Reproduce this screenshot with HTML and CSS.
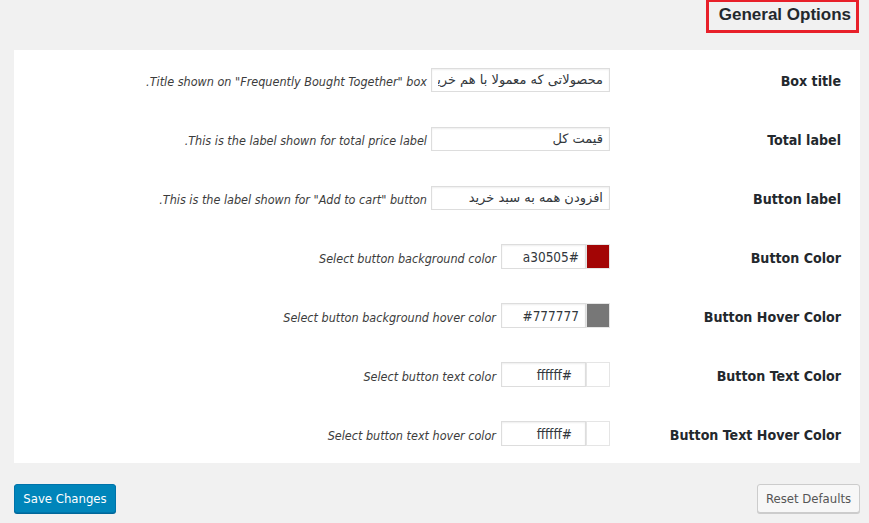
FILE: index.html
```html
<!DOCTYPE html>
<html lang="fa" dir="rtl">
<head>
<meta charset="utf-8">
<link rel="stylesheet" href="styles.css">
</head>
<body>
<div class="page">
  <div class="head">
    <h2 class="title" dir="ltr">General Options</h2>
  </div>
  <div class="panel">
    <div class="row">
      <div class="label">Box title</div>
      <div class="field">
        <input class="text" type="text" value="محصولاتی که معمولا با هم خریداری می شوند">
        <span class="desc">Title shown on "Frequently Bought Together" box.</span>
      </div>
    </div>
    <div class="row">
      <div class="label">Total label</div>
      <div class="field">
        <input class="text" type="text" value="قیمت کل">
        <span class="desc">This is the label shown for total price label.</span>
      </div>
    </div>
    <div class="row">
      <div class="label">Button label</div>
      <div class="field">
        <input class="text" type="text" value="افزودن همه به سبد خرید">
        <span class="desc">This is the label shown for "Add to cart" button.</span>
      </div>
    </div>
    <div class="row">
      <div class="label">Button Color</div>
      <div class="field">
        <span class="picker"><span class="swatch sw-red"></span><input class="color" type="text" value="#a30505"></span>
        <span class="desc">Select button background color</span>
      </div>
    </div>
    <div class="row">
      <div class="label">Button Hover Color</div>
      <div class="field">
        <span class="picker"><span class="swatch sw-grey"></span><input class="color" type="text" value="#777777"></span>
        <span class="desc">Select button background hover color</span>
      </div>
    </div>
    <div class="row">
      <div class="label">Button Text Color</div>
      <div class="field">
        <span class="picker"><span class="swatch sw-white"></span><input class="color color-wide" type="text" value="#ffffff"></span>
        <span class="desc">Select button text color</span>
      </div>
    </div>
    <div class="row">
      <div class="label">Button Text Hover Color</div>
      <div class="field">
        <span class="picker"><span class="swatch sw-white"></span><input class="color color-wide" type="text" value="#ffffff"></span>
        <span class="desc">Select button text hover color</span>
      </div>
    </div>
  </div>
  <div class="footer" dir="ltr">
    <button class="btn primary" type="button">Save Changes</button>
    <button class="btn secondary" type="button">Reset Defaults</button>
  </div>
</div>
</body>
</html>
```
FILE: styles.css
```css
html, body {
  margin: 0;
  padding: 0;
  background: #f1f1f1;
}
body {
  font-family: "DejaVu Sans Condensed", "DejaVu Sans", sans-serif;
  color: #23282d;
  width: 869px;
  height: 523px;
  overflow: hidden;
}
.page {
  display: flex;
  flex-direction: column;
}
.head {
  display: flex;
  padding-right: 10px;
  height: 50px;
}
.title {
  margin: 0;
  box-sizing: border-box;
  width: 153px;
  height: 33px;
  border: 3px solid #e8202a;
  border-top-width: 2px;
  font-family: "Liberation Sans", Arial, sans-serif;
  font-weight: bold;
  font-size: 17px;
  color: #23282d;
  text-align: right;
  padding: 3px 5px 0 0;
  line-height: 20px;
}
.panel {
  background: #fff;
  margin: 0 9px 0 14px;
  display: flex;
  flex-direction: column;
}
.row {
  display: flex;
  align-items: center;
  height: 59px;
}
.label {
  width: 250px;
  box-sizing: border-box;
  padding-right: 19px;
  font-weight: bold;
  font-size: 14.1px;
  color: #23282d;
  padding-top: 2px;
}
.field {
  display: flex;
  align-items: center;
  gap: 4px;
}
.text {
  box-sizing: border-box;
  width: 179px;
  height: 24px;
  border: 1px solid #ddd;
  box-shadow: inset 0 1px 2px rgba(0,0,0,0.07);
  font-family: "DejaVu Sans", sans-serif;
  font-size: 13px;
  color: #32373c;
  padding: 0 6px;
  margin: 0;
  direction: rtl;
  outline: none;
  background: #fff;
}
.picker {
  display: flex;
  align-items: center;
  margin-left: 1px;
}
.color {
  box-sizing: border-box;
  width: 85px;
  height: 25px;
  border: 1px solid #ddd;
  box-shadow: inset 0 1px 2px rgba(0,0,0,0.07);
  font-family: "DejaVu Sans Condensed", "DejaVu Sans", sans-serif;
  font-size: 13.5px;
  color: #32373c;
  padding: 0 6px 0 7px;
  margin: 0;
  direction: rtl;
  outline: none;
  background: #fff;
}
.color-wide {
  padding-right: 13px;
}
.swatch {
  display: block;
  box-sizing: border-box;
  width: 24px;
  height: 25px;
  border: 1px solid #e5e5e5;
}
.sw-red { background: #a30505; }
.sw-grey { background: #777777; }
.sw-white { background: #ffffff; }
.desc {
  font-style: italic;
  font-size: 12.5px;
  color: #3c3c3c;
  white-space: nowrap;
  padding-top: 3px;
}
.footer {
  display: flex;
  justify-content: space-between;
  margin: 21px 9px 0 14px;
}
.btn {
  box-sizing: border-box;
  height: 29px;
  border-radius: 3px;
  font-family: "DejaVu Sans Condensed", "DejaVu Sans", sans-serif;
  font-size: 13px;
  padding: 0 4px;
  margin: 0;
  white-space: nowrap;
  cursor: pointer;
}
.primary {
  width: 102px;
  background: #0085ba;
  border: 1px solid #0073aa;
  color: #fff;
  box-shadow: 0 1px 0 #006799;
}
.secondary {
  width: 103px;
  background: #f7f7f7;
  border: 1px solid #ccc;
  color: #555;
  box-shadow: 0 1px 0 #ccc;
}
```
